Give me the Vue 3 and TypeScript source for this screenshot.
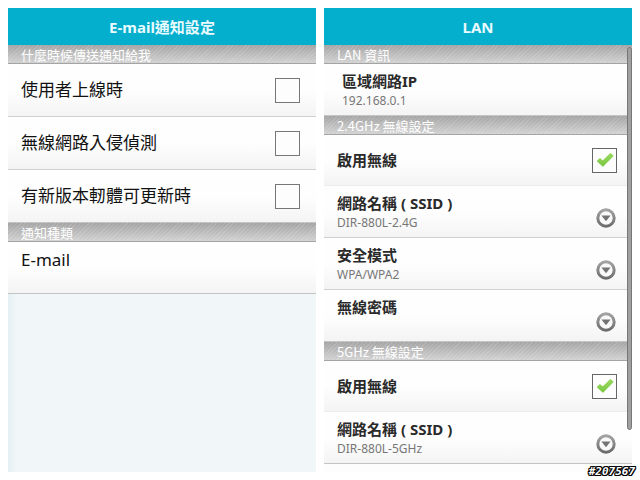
<script setup lang="ts">
import { reactive } from 'vue'

type Kind = 'check' | 'select' | 'info' | 'plain'

interface Row {
  id: string
  kind: Kind
  label: string
  value?: string
  checked?: boolean
}

interface Section {
  title: string
  rows: Row[]
}

interface Panel {
  id: string
  title: string
  scroll: boolean
  sections: Section[]
}

const panels = reactive<Panel[]>([
  {
    id: 'mail',
    title: 'E-mail通知設定',
    scroll: false,
    sections: [
      {
        title: '什麼時候傳送通知給我',
        rows: [
          { id: 'online', kind: 'check', label: '使用者上線時', checked: false },
          { id: 'intrusion', kind: 'check', label: '無線網路入侵偵測', checked: false },
          { id: 'firmware', kind: 'check', label: '有新版本軔體可更新時', checked: false },
        ],
      },
      { title: '通知種類', rows: [{ id: 'email', kind: 'plain', label: 'E-mail' }] },
    ],
  },
  {
    id: 'lan',
    title: 'LAN',
    scroll: true,
    sections: [
      { title: 'LAN 資訊', rows: [{ id: 'ip', kind: 'info', label: '區域網路IP', value: '192.168.0.1' }] },
      {
        title: '2.4GHz 無線設定',
        rows: [
          { id: 'wifi24', kind: 'check', label: '啟用無線', checked: true },
          { id: 'ssid24', kind: 'select', label: '網路名稱 ( SSID )', value: 'DIR-880L-2.4G' },
          { id: 'sec24', kind: 'select', label: '安全模式', value: 'WPA/WPA2' },
          { id: 'pass24', kind: 'select', label: '無線密碼' },
        ],
      },
      {
        title: '5GHz 無線設定',
        rows: [
          { id: 'wifi5', kind: 'check', label: '啟用無線', checked: true },
          { id: 'ssid5', kind: 'select', label: '網路名稱 ( SSID )', value: 'DIR-880L-5GHz' },
        ],
      },
    ],
  },
])
</script>

<template>
  <main class="page">
    <section v-for="panel in panels" :key="panel.id" class="panel" :class="panel.id">
      <header class="bar"><h1>{{ panel.title }}</h1></header>
      <div v-for="section in panel.sections" :key="section.title" class="group">
        <h2 class="group-title">{{ section.title }}</h2>
        <template v-for="row in section.rows" :key="row.id">
          <label v-if="row.kind === 'check'" class="row check-row" :for="row.id">
            <span class="label">{{ row.label }}</span>
            <span class="box">
              <input :id="row.id" v-model="row.checked" type="checkbox" />
              <svg v-if="row.checked" viewBox="0 0 24 24" aria-hidden="true">
                <defs>
                  <linearGradient :id="row.id + '-tick'" x1="0" y1="0" x2="0" y2="1">
                    <stop offset="0" stop-color="#98d95f" />
                    <stop offset="1" stop-color="#7cc843" />
                  </linearGradient>
                </defs>
                <path
                  d="M5.2 12.7 7.6 10.3 10.3 12.6 17.7 5.3 20.2 7.5 10.5 17.5Z"
                  :fill="`url(#${row.id}-tick)`"
                  :stroke="`url(#${row.id}-tick)`"
                  stroke-width="1"
                  stroke-linejoin="round"
                />
              </svg>
            </span>
          </label>
          <button v-else-if="row.kind === 'select'" type="button" class="row detail-row">
            <span class="texts">
              <span class="label">{{ row.label }}</span>
              <span v-if="row.value" class="value">{{ row.value }}</span>
            </span>
            <svg class="more" viewBox="0 0 20 20" aria-hidden="true">
              <defs>
                <linearGradient :id="row.id + '-ring'" x1="0" y1="0" x2="0" y2="1">
                  <stop offset="0" stop-color="#a3a3a3" />
                  <stop offset="1" stop-color="#6c6c6c" />
                </linearGradient>
              </defs>
              <circle cx="10" cy="10" r="8.2" fill="#fafafa" :stroke="`url(#${row.id}-ring)`" stroke-width="3" />
              <path d="M5.4 7.4h9.2L10 13.2Z" fill="#747474" />
            </svg>
          </button>
          <div v-else class="row detail-row" :class="row.kind">
            <span class="texts">
              <span class="label">{{ row.label }}</span>
              <span v-if="row.value" class="value">{{ row.value }}</span>
            </span>
          </div>
        </template>
      </div>
      <span v-if="panel.scroll" class="thumb"></span>
    </section>
    <span class="stamp">#207567</span>
  </main>
</template>

<style>
body {
  margin: 0;
  background: #fff;
}
</style>

<style scoped>
.page {
  position: relative;
  box-sizing: border-box;
  min-height: 100vh;
  padding: 8px;
  display: grid;
  grid-template-columns: 1fr 1fr;
  gap: 8px;
  font-family: 'Noto Sans', 'Noto Sans CJK TC', sans-serif;
}
.panel {
  position: relative;
  min-width: 0;
  background:
    linear-gradient(90deg, #e3eff2, rgba(227, 239, 242, 0) 8px),
    #f1f6f8;
}
.panel.lan {
  background: #fdfdfd;
}
.bar {
  height: 37px;
  display: flex;
  align-items: center;
  justify-content: center;
  background: #04aecd;
  color: #e9fbff;
}
h1 {
  margin: 0;
  font-size: 15px;
  line-height: 22px;
  font-weight: 700;
}
.group-title {
  box-sizing: border-box;
  height: 19px;
  margin: 0;
  padding: 0 13px;
  border-bottom: 1px solid #a4a4a4;
  background:
    repeating-linear-gradient(135deg, rgba(255, 255, 255, 0.12) 0 1px, transparent 1px 3px),
    linear-gradient(#a5a5a5, #d2d2d2);
  color: #fff;
  font-family: 'Noto Sans CJK TC', sans-serif;
  font-size: 13px;
  line-height: 20px;
  font-weight: 400;
}
.row {
  box-sizing: border-box;
  width: 100%;
  display: flex;
  justify-content: space-between;
  margin: 0;
  padding: 0 16px 0 13px;
  border: 0;
  border-bottom: 1px solid #d0d0d0;
  background: linear-gradient(#fefefe 50%, #f4f4f4);
  font-family: inherit;
  text-align: left;
}
.group .row:last-child {
  border-bottom-color: #c4c4c4;
}
.check-row {
  height: 53px;
  align-items: center;
}
.detail-row {
  height: 52px;
}
.label {
  font-size: 17px;
  line-height: 24px;
  color: #111;
}
.lan .row {
  padding-right: 15px;
}
.lan .check-row {
  height: 51px;
  border-bottom-color: #ececec;
}
.lan .label {
  font-size: 15px;
  line-height: 22px;
  font-weight: 700;
  color: #2a2a2a;
}
.texts {
  display: flex;
  flex-direction: column;
  padding-top: 6px;
}
.row.info {
  padding-left: 18px;
}
.value {
  font-size: 12px;
  line-height: 17px;
  color: #777;
}
.box {
  display: grid;
  flex: none;
  width: 25px;
  height: 25px;
}
.box > * {
  grid-area: 1 / 1;
}
.box input {
  appearance: none;
  box-sizing: border-box;
  width: 25px;
  height: 25px;
  margin: 0;
  border: 1px solid #777;
  background: #fdfdfd;
}
.lan .box input {
  border-color: #666;
}
.box svg {
  width: 25px;
  height: 25px;
  pointer-events: none;
}
.more {
  align-self: flex-end;
  flex: none;
  width: 20px;
  height: 20px;
  margin: 0 1px 9px 0;
}
.thumb {
  position: absolute;
  top: 39px;
  right: 0;
  box-sizing: border-box;
  width: 5px;
  height: 82.5%;
  border: 1px solid #777;
  border-radius: 3px;
  background: #a0a0a0;
}
.stamp {
  position: absolute;
  right: 5px;
  bottom: 1px;
  color: #fff;
  font-family: 'DejaVu Sans Mono', monospace;
  font-size: 11px;
  line-height: 14px;
  font-weight: 700;
  font-style: italic;
  text-shadow:
    -1px -1px #000, 0 -1px #000, 1px -1px #000,
    -1px 0 #000, 1px 0 #000,
    -1px 1px #000, 0 1px #000, 1px 1px #000;
}
</style>
